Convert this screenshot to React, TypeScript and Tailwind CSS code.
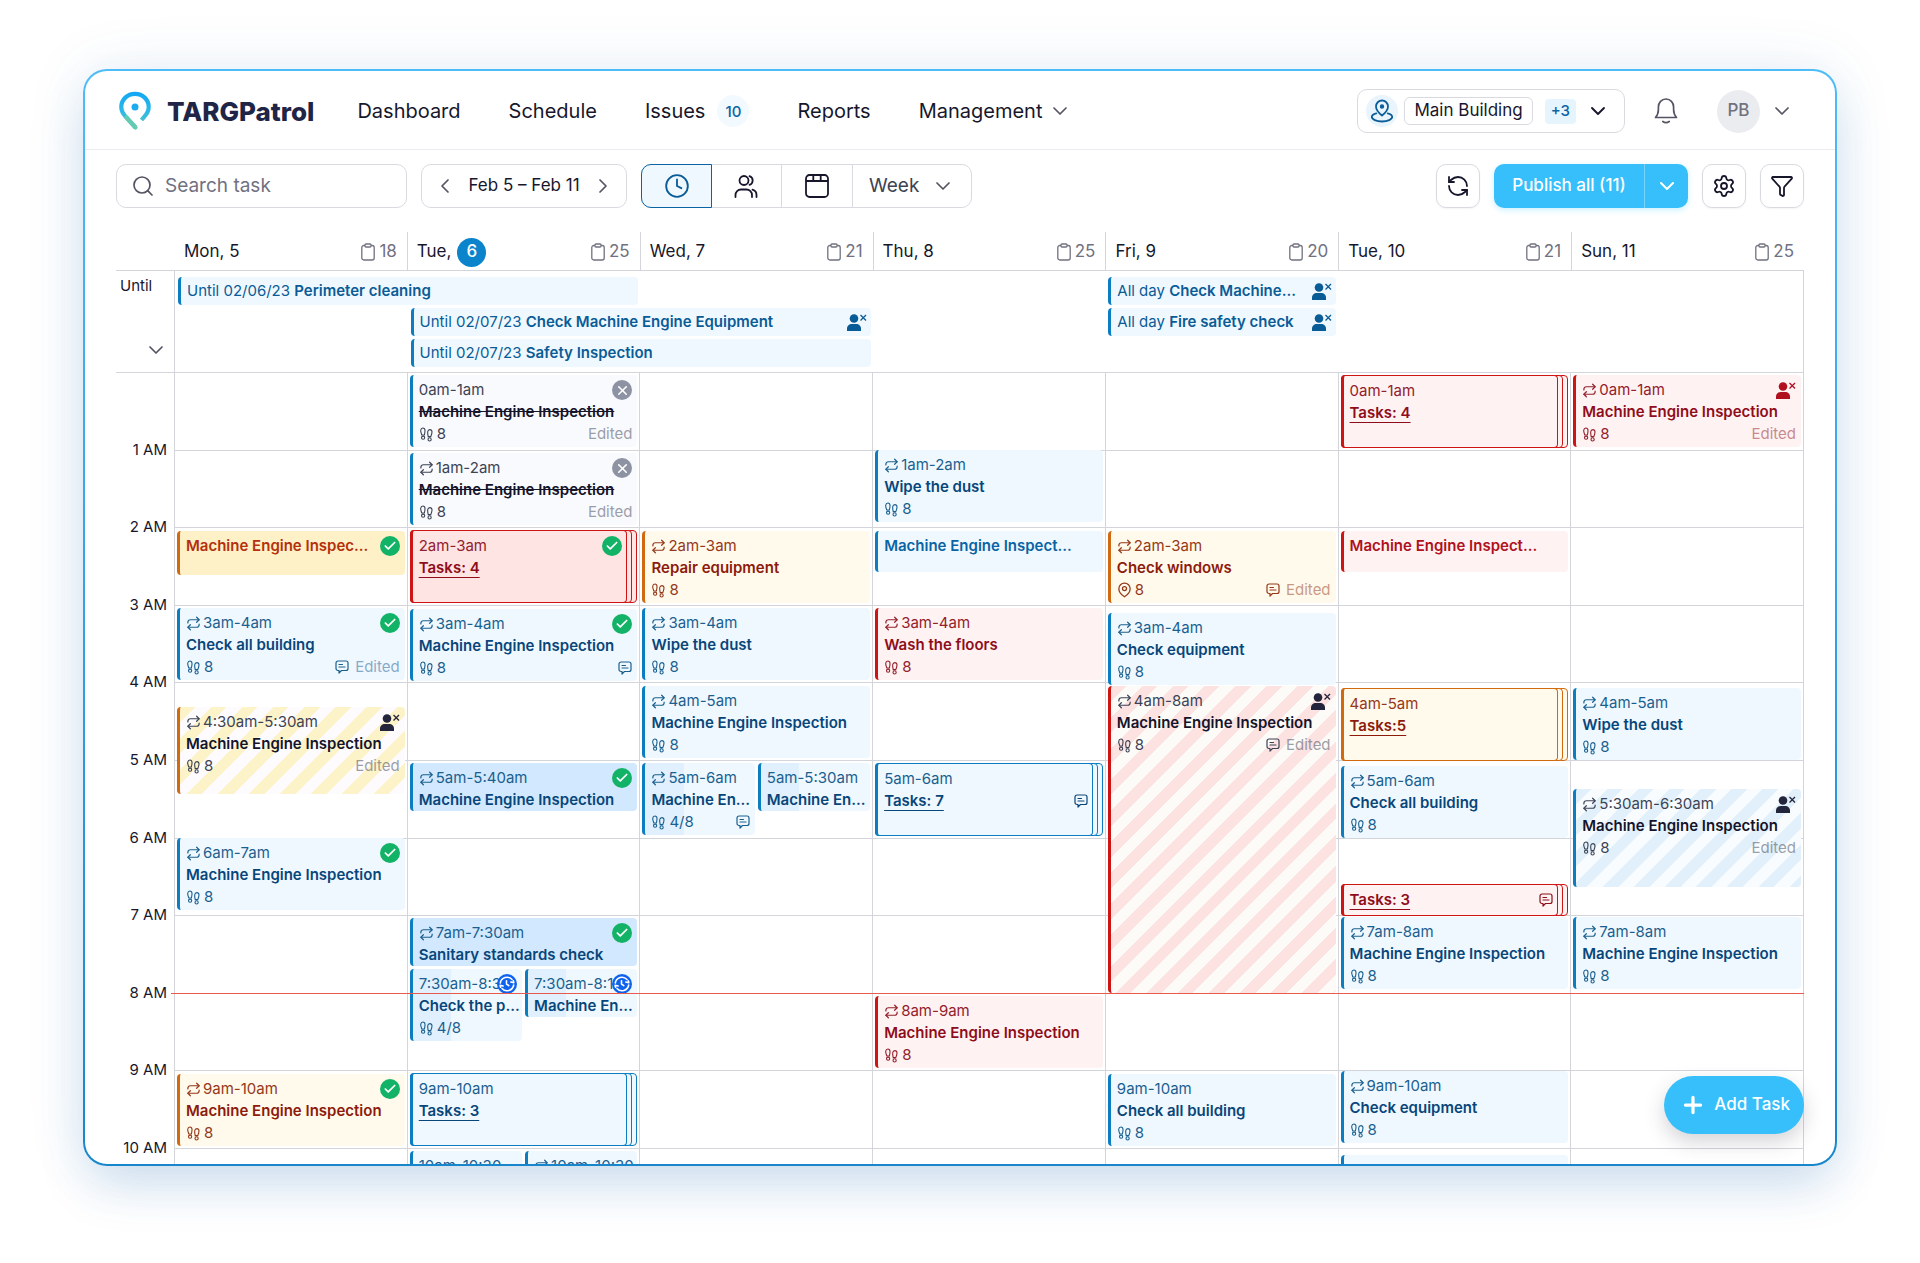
import { Check, ChevronDown, ChevronLeft, ChevronRight, Clock, Funnel, Plus, RefreshCcw, Repeat, Search, Settings, X } from "lucide-react";

type Tone = "blue" | "sky" | "progress" | "amber" | "sand" | "red" | "rose" | "gray" | "stripeAmber" | "stripeRed" | "stripeBlue";

type Task = {
    top: number;
    height: number;
    tone: Tone;
    title?: string;
    time?: string;
    repeat?: boolean;
    count?: string;
    pin?: boolean;
    status?: "done" | "cancelled" | "running" | "unassigned";
    note?: boolean;
    edited?: boolean;
    stack?: boolean;
    half?: boolean;
};

const tones: Record<Tone, { box: string; border: string; time: string; title: string; single: string }> = {
    blue: { box: "bg-[#f0f8ff]", border: "border-[#0b7dc0]", time: "text-[#1a608f]", title: "text-[#08467a]", single: "text-[#0a64a4]" },
    sky: { box: "bg-[#d1e8fe]", border: "border-[#0b7dc0]", time: "text-[#1a608f]", title: "text-[#08467a]", single: "text-[#0a64a4]" },
    progress: { box: "bg-[linear-gradient(90deg,#e0f0fe_35%,#f0f8ff_35%)]", border: "border-[#0b7dc0]", time: "text-[#1a608f]", title: "text-[#08467a]", single: "text-[#0a64a4]" },
    amber: { box: "bg-[#fffaeb]", border: "border-[#d0690f]", time: "text-[#95381a]", title: "text-[#8d1b0c]", single: "text-[#b4300c]" },
    sand: { box: "bg-[#fef0c7]", border: "border-[#d0690f]", time: "text-[#95381a]", title: "text-[#8d1b0c]", single: "text-[#b4300c]" },
    red: { box: "bg-[#fef3f2]", border: "border-[#cf1414]", time: "text-[#93202c]", title: "text-[#8f0d1b]", single: "text-[#b01020]" },
    rose: { box: "bg-[#fee4e2]", border: "border-[#cf1414]", time: "text-[#93202c]", title: "text-[#8f0d1b]", single: "text-[#b01020]" },
    gray: { box: "bg-[#f9fafd]", border: "border-[#0b7dc0]", time: "text-[#3c4354]", title: "text-[#14142b]", single: "text-[#14142b]" },
    stripeAmber: { box: "bg-[repeating-linear-gradient(135deg,#fdf3c9_0_11px,#fdfbfd_11px_22px)]", border: "border-[#d0690f]", time: "text-[#3c4354]", title: "text-[#14142b]", single: "text-[#14142b]" },
    stripeRed: { box: "bg-[repeating-linear-gradient(135deg,#fde2e2_0_11px,#fcfbf8_11px_22px)]", border: "border-[#cf1414]", time: "text-[#3c4354]", title: "text-[#14142b]", single: "text-[#14142b]" },
    stripeBlue: { box: "bg-[repeating-linear-gradient(135deg,#e1f0fb_0_11px,#f8fcff_11px_22px)]", border: "border-[#0b7dc0]", time: "text-[#3c4354]", title: "text-[#14142b]", single: "text-[#14142b]" },
};

const days = [
    { name: "Mon, 5", total: 18 },
    { name: "Tue,", today: "6", total: 25 },
    { name: "Wed, 7", total: 21 },
    { name: "Thu, 8", total: 25 },
    { name: "Fri, 9", total: 20 },
    { name: "Tue, 10", total: 21 },
    { name: "Sun, 11", total: 25 },
];

const hours = ["1 AM", "2 AM", "3 AM", "4 AM", "5 AM", "6 AM", "7 AM", "8 AM", "9 AM", "10 AM"];

const mei = "Machine Engine Inspection";

// top and height are in pixels, one hour is about 78
const week: Task[][] = [
    [
        { top: 158, height: 44, tone: "sand", title: "Machine Engine Inspec...", status: "done" },
        { top: 235, height: 72, tone: "blue", time: "3am-4am", repeat: true, title: "Check all building", count: "8", status: "done", note: true, edited: true },
        { top: 334, height: 87, tone: "stripeAmber", time: "4:30am-5:30am", repeat: true, title: mei, count: "8", status: "unassigned", edited: true },
        { top: 465, height: 72, tone: "blue", time: "6am-7am", repeat: true, title: mei, count: "8", status: "done" },
        { top: 701, height: 72, tone: "amber", time: "9am-10am", repeat: true, title: mei, count: "8", status: "done" },
    ],
    [
        { top: 2, height: 72, tone: "gray", time: "0am-1am", title: mei, count: "8", status: "cancelled", edited: true },
        { top: 80, height: 72, tone: "gray", time: "1am-2am", repeat: true, title: mei, count: "8", status: "cancelled", edited: true },
        { top: 157, height: 73, tone: "rose", time: "2am-3am", title: "Tasks: 4", status: "done", stack: true },
        { top: 236, height: 72, tone: "blue", time: "3am-4am", repeat: true, title: mei, count: "8", status: "done", note: true },
        { top: 390, height: 48, tone: "sky", time: "5am-5:40am", repeat: true, title: mei, status: "done" },
        { top: 545, height: 48, tone: "sky", time: "7am-7:30am", repeat: true, title: "Sanitary standards check", status: "done" },
        { top: 596, height: 72, tone: "progress", time: "7:30am-8:3", title: "Check the p...", count: "4/8", status: "running", half: true },
        { top: 596, height: 48, tone: "progress", time: "7:30am-8:1", title: "Machine En...", status: "running", half: true },
        { top: 700, height: 73, tone: "blue", time: "9am-10am", title: "Tasks: 3", stack: true },
        { top: 778, height: 72, tone: "blue", time: "10am-10:30", half: true },
        { top: 778, height: 72, tone: "blue", time: "10am-10:30", repeat: true, half: true },
    ],
    [
        { top: 158, height: 72, tone: "amber", time: "2am-3am", repeat: true, title: "Repair equipment", count: "8" },
        { top: 235, height: 72, tone: "blue", time: "3am-4am", repeat: true, title: "Wipe the dust", count: "8" },
        { top: 313, height: 72, tone: "blue", time: "4am-5am", repeat: true, title: mei, count: "8" },
        { top: 390, height: 72, tone: "progress", time: "5am-6am", repeat: true, title: "Machine En...", count: "4/8", note: true, half: true },
        { top: 390, height: 48, tone: "progress", time: "5am-5:30am", title: "Machine En...", half: true },
    ],
    [
        { top: 77, height: 72, tone: "blue", time: "1am-2am", repeat: true, title: "Wipe the dust", count: "8" },
        { top: 158, height: 41, tone: "blue", title: "Machine Engine Inspect..." },
        { top: 235, height: 72, tone: "red", time: "3am-4am", repeat: true, title: "Wash the floors", count: "8" },
        { top: 390, height: 73, tone: "blue", time: "5am-6am", title: "Tasks: 7", note: true, stack: true },
        { top: 623, height: 72, tone: "red", time: "8am-9am", repeat: true, title: mei, count: "8" },
    ],
    [
        { top: 158, height: 72, tone: "amber", time: "2am-3am", repeat: true, title: "Check windows", count: "8", pin: true, note: true, edited: true },
        { top: 240, height: 72, tone: "blue", time: "3am-4am", repeat: true, title: "Check equipment", count: "8" },
        { top: 313, height: 307, tone: "stripeRed", time: "4am-8am", repeat: true, title: mei, count: "8", status: "unassigned", note: true, edited: true },
        { top: 701, height: 72, tone: "blue", time: "9am-10am", title: "Check all building", count: "8" },
    ],
    [
        { top: 2, height: 73, tone: "red", time: "0am-1am", title: "Tasks: 4", stack: true },
        { top: 158, height: 41, tone: "red", title: "Machine Engine Inspect..." },
        { top: 315, height: 73, tone: "amber", time: "4am-5am", title: "Tasks:5", stack: true },
        { top: 393, height: 72, tone: "blue", time: "5am-6am", repeat: true, title: "Check all building", count: "8" },
        { top: 511, height: 32, tone: "red", title: "Tasks: 3", note: true, stack: true },
        { top: 544, height: 72, tone: "blue", time: "7am-8am", repeat: true, title: mei, count: "8" },
        { top: 698, height: 72, tone: "blue", time: "9am-10am", repeat: true, title: "Check equipment", count: "8" },
        { top: 782, height: 72, tone: "blue" },
    ],
    [
        { top: 2, height: 72, tone: "red", time: "0am-1am", repeat: true, title: mei, count: "8", status: "unassigned", edited: true },
        { top: 315, height: 72, tone: "blue", time: "4am-5am", repeat: true, title: "Wipe the dust", count: "8" },
        { top: 416, height: 98, tone: "stripeBlue", time: "5:30am-6:30am", repeat: true, title: mei, count: "8", status: "unassigned", edited: true },
        { top: 544, height: 72, tone: "blue", time: "7am-8am", repeat: true, title: mei, count: "8" },
    ],
];

function Logo() {
    return (
        <svg width="32" height="40" viewBox="0 0 32 40" fill="none">
            <defs>
                <linearGradient id="logo" x1="16" y1="0" x2="16" y2="40" gradientUnits="userSpaceOnUse">
                    <stop stopColor="#0fa6f5" />
                    <stop offset="0.5" stopColor="#2cb8e8" />
                    <stop offset="1" stopColor="#62cbb2" />
                </linearGradient>
            </defs>
            <path d="M16.500 36.500 6.600 25.600C4 22.800 2.300 19.800 2.300 16 2.300 8.600 8.400 2.800 16 2.800S29.700 8.600 29.700 16c0 3.800-1.700 6.800-4.300 9.600L22.500 29" stroke="url(#logo)" strokeWidth="4.200" strokeLinejoin="round" />
            <path d="m7.500 26.500 9 10" stroke="#62cbb2" strokeWidth="4.200" strokeLinecap="round" />
            <circle cx="16" cy="16" r="3.500" fill="#1cabee" />
        </svg>
    );
}

function Bell() {
    return (
        <svg width="26" height="28" viewBox="0 0 26 28" fill="none" stroke="#545463" strokeWidth="1.700" strokeLinecap="round" strokeLinejoin="round">
            <path d="M2.500 20.500c2-2.300 2.900-4.700 2.900-8V10C5.400 5.500 8.600 2 13 2s7.600 3.500 7.600 8v2.500c0 3.300.9 5.700 2.900 8Z" />
            <path d="M9.800 24.500c1.800 1.300 4.600 1.300 6.400 0" />
        </svg>
    );
}

function SitePin() {
    return (
        <svg width="24" height="24" viewBox="0 0 24 24" fill="none" stroke="#0d5e98" strokeWidth="1.800" strokeLinecap="round" strokeLinejoin="round">
            <path d="M12 16.500s-6-4.700-6-9a6 6 0 0 1 12 0c0 4.300-6 9-6 9Z" />
            <circle cx="12" cy="7.500" r="1.300" fill="#0d5e98" />
            <path d="M6.300 14.300C3.500 15 1.800 16.300 1.800 17.800 1.800 20.500 6.300 22.500 12 22.500s10.200-2 10.200-4.700c0-1.500-1.700-2.800-4.500-3.500" />
        </svg>
    );
}

function People() {
    return (
        <svg width="26" height="26" viewBox="0 0 26 26" fill="none" stroke="currentColor" strokeWidth="1.800" strokeLinecap="round" strokeLinejoin="round">
            <circle cx="11" cy="7.500" r="4.500" />
            <path d="M2.500 24v-2a5.500 5.500 0 0 1 5.500-5.500h5.500A5.500 5.500 0 0 1 19 22v2" />
            <path d="M16.500 3.200a4.500 4.500 0 0 1 0 8.600M19.500 16.600A5.500 5.500 0 0 1 23.500 22v2" />
        </svg>
    );
}

function CalendarGrid() {
    return (
        <svg width="26" height="26" viewBox="0 0 26 26" fill="none" stroke="currentColor" strokeWidth="1.800" strokeLinejoin="round">
            <rect x="2" y="2" width="22" height="22" rx="3.500" />
            <path d="M2 8h22M9.300 2v6M16.700 2v6" />
        </svg>
    );
}

function Clipboard() {
    return (
        <svg width="14" height="18" viewBox="0 0 14 18" fill="none" stroke="#71717f" strokeWidth="1.300" strokeLinejoin="round">
            <rect x="0.800" y="2.500" width="12.400" height="14.500" rx="2" />
            <rect x="4" y="1" width="6" height="3" rx="1" fill="white" />
        </svg>
    );
}

function Steps() {
    return (
        <svg className="shrink-0" width="15" height="15" viewBox="0 0 15 15" fill="none" stroke="currentColor" strokeWidth="1.100">
            <path d="M2.800 8C2 6 1.500 4.700 1.700 3.200 1.900 1.800 2.700 1 3.900 1s2 .8 2.100 2.200C6.100 4.700 5.800 6 5.400 8Z" />
            <path d="M9.200 9.600C8.800 7.600 8.500 6.300 8.700 4.800 8.900 3.400 9.700 2.600 10.900 2.600s2 .8 2.100 2.200c.1 1.500-.4 2.800-1.200 4.800Z" />
            <circle cx="4.100" cy="10.700" r="1.600" />
            <circle cx="10.600" cy="12.400" r="1.600" />
        </svg>
    );
}

function Pin() {
    return (
        <svg className="shrink-0" width="15" height="16" viewBox="0 0 13 15" fill="none" stroke="currentColor" strokeWidth="1.200">
            <path d="M6.500 13.800S1.200 10.600 1.200 6.300a5.300 5.300 0 0 1 10.600 0c0 4.300-5.300 7.500-5.300 7.500Z" />
            <circle cx="6.500" cy="6.200" r="1.900" />
        </svg>
    );
}

function Note() {
    return (
        <svg className="shrink-0" width="14" height="14" viewBox="0 0 14 14" fill="none" stroke="currentColor" strokeWidth="1.200" strokeLinecap="round" strokeLinejoin="round">
            <path d="M3 1h8a2 2 0 0 1 2 2v5.500a2 2 0 0 1-2 2H6.500L4 13v-2.500H3a2 2 0 0 1-2-2V3a2 2 0 0 1 2-2Z" />
            <path d="M4 4.500h3.500M4 7h6" />
        </svg>
    );
}

function Unassigned() {
    return (
        <svg className="shrink-0" width="21" height="19" viewBox="0 0 21 19" fill="currentColor">
            <circle cx="8" cy="5.500" r="4.300" />
            <path d="M1 18v-2.500C1 12.800 3.200 11 5.800 11h4.400c2.600 0 4.800 1.800 4.800 4.500V18Z" />
            <path d="m14.500 2 5.500 5.500M20 2l-5.500 5.500" stroke="currentColor" strokeWidth="1.300" />
        </svg>
    );
}

function Running() {
    return (
        <svg className="shrink-0" width="20" height="20" viewBox="0 0 20 20" fill="none" stroke="white" strokeWidth="1.600" strokeLinecap="round" strokeLinejoin="round">
            <circle cx="10" cy="10" r="10" fill="#0f62ee" stroke="none" />
            <path d="M3.300 9A6.800 6.800 0 0 1 15 5.500M16.700 11A6.800 6.800 0 0 1 5 14.500" />
            <path d="M16.300 6.800a7 7 0 0 1 .5 2l-3-.8M3.600 13.200a7 7 0 0 1-.5-2l3 .8" />
            <path d="M9.500 6.800V10l2.300 1.600" />
        </svg>
    );
}

function Status({ status }: { status: Task["status"] }) {
    if (status === "done") {
        return (
            <span className="flex size-5 shrink-0 items-center justify-center rounded-full bg-[#12b366] text-white">
                <Check size={14} strokeWidth={3} />
            </span>
        );
    }
    if (status === "cancelled") {
        return (
            <span className="flex size-5 shrink-0 items-center justify-center rounded-full bg-[#8e93a4] text-white">
                <X size={15} strokeWidth={2.5} />
            </span>
        );
    }
    if (status === "running") return <Running />;
    if (status === "unassigned") return <Unassigned />;
    return null;
}

function TaskBody({ task }: { task: Task }) {
    const tone = tones[task.tone];
    const titleClass = `${task.time || task.stack ? tone.title : tone.single} ${task.stack ? "underline underline-offset-4" : ""} ${task.status === "cancelled" ? "line-through" : ""}`;

    return (
        <>
            {task.time && (
                <div className={`flex h-[22px] items-center justify-between ${tone.time}`}>
                    <span className="flex min-w-0 flex-1 items-center gap-0.5">
                        {task.repeat && <Repeat className="shrink-0" size={15} strokeWidth={1.9} />}
                        {task.time}
                    </span>
                    <span className={task.tone === "red" ? "text-[#b01020]" : "text-[#22253b]"}><Status status={task.status} /></span>
                </div>
            )}
            {task.title && (
                <div className={`flex h-[22px] items-center justify-between font-semibold ${titleClass}`}>
                    <span>{task.title}</span>
                    {!task.time && <Status status={task.status} />}
                    {task.stack && task.note && <Note />}
                </div>
            )}
            {!task.stack && task.count && (
                <div className={`flex h-[22px] items-center justify-between ${tone.time}`}>
                    <span className="flex items-center gap-[3px]">
                        {task.pin ? <Pin /> : <Steps />}
                        {task.count}
                    </span>
                    <span className="flex items-center gap-1.5">
                        {task.note && <Note />}
                        {task.edited && <span className="opacity-50">Edited</span>}
                    </span>
                </div>
            )}
        </>
    );
}

function TaskCard({ task }: { task: Task }) {
    const tone = tones[task.tone];
    const style = { gridRow: `${task.top + 1} / span ${task.height}` };
    const span = task.half ? "" : "col-span-2";

    if (task.stack) {
        const layer = `rounded border ${tone.border} ${tone.box} [grid-area:1/1]`;
        return (
            <article style={style} className={`${span} grid text-[15px] leading-[22px] whitespace-nowrap`}>
                <div className={layer}></div>
                <div className={`${layer} mr-[5px]`}></div>
                <div className={`${layer} mr-[10px] border-l-3 pt-1 pr-1 pl-1.5`}>
                    <TaskBody task={task} />
                </div>
            </article>
        );
    }

    return (
        <article style={style} className={`${span} rounded border-l-3 pt-1 pr-[5px] pl-1.5 text-[15px] leading-[22px] whitespace-nowrap ${tone.border} ${tone.box}`}>
            <TaskBody task={task} />
        </article>
    );
}

function LongTask({ when, title, place, unassigned }: { when: string; title: string; place: string; unassigned?: boolean }) {
    return (
        <article className={`mr-0.5 ml-[3px] flex items-center justify-between rounded border-l-3 border-[#0b7dc0] bg-[#f0f8ff] pr-1 pl-1.5 text-[15px] whitespace-nowrap text-[#0a5c96] ${place}`}>
            <span>{when} <b className="font-semibold">{title}</b></span>
            {unassigned && <Unassigned />}
        </article>
    );
}

function Header() {
    return (
        <header className="flex h-[79px] shrink-0 items-center border-b border-[#ebecef] pt-0.5 pr-[41px] pl-[34px]">
            <a href="#" className="flex items-center gap-4 text-[26px] font-extrabold text-[#1f2547]">
                <Logo />
                TARGPatrol
            </a>
            <nav className="ml-[43px] flex items-center gap-12 text-xl text-[#17172c]">
                <a href="#">Dashboard</a>
                <a href="#">Schedule</a>
                <a href="#" className="flex items-center gap-3">
                    Issues
                    <span className="flex size-8 items-center justify-center rounded-full bg-[#f2f9ff] text-[15px] font-medium text-[#0a64a4]">10</span>
                </a>
                <a href="#">Reports</a>
                <button className="flex items-center gap-1.5">
                    Management
                    <ChevronDown size={24} strokeWidth={1.7} color="#545463" />
                </button>
            </nav>
            <div className="ml-auto flex items-center">
                <button className="flex h-11 items-center rounded-[10px] border border-[#d9dae0] pr-3.5 pl-2 text-[#17172c]">
                    <span className="flex size-8 items-center justify-center rounded-full bg-[#e9f4fd]"><SitePin /></span>
                    <span className="ml-1.5 flex h-7 items-center rounded-md border border-[#d9dae0] px-[9px] text-[17px]">Main Building</span>
                    <span className="ml-3 flex h-[25px] items-center rounded bg-[#e6f4fe] px-1.5 text-[15px] font-medium text-[#0a64a4]">+3</span>
                    <ChevronDown className="ml-2.5" size={24} strokeWidth={1.9} />
                </button>
                <button className="ml-7" aria-label="Notifications"><Bell /></button>
                <button className="ml-[38px] flex size-[43px] items-center justify-center rounded-full bg-[#ebecef] text-[17px] font-medium text-[#71717f]">PB</button>
                <button className="ml-2.5" aria-label="Account"><ChevronDown size={24} strokeWidth={1.7} color="#545463" /></button>
            </div>
        </header>
    );
}

function Toolbar() {
    const square = "flex size-11 items-center justify-center rounded-[10px] border border-[#d9dae0] text-[#17172c] shadow-xs";
    return (
        <div className="flex shrink-0 items-center gap-3.5 px-[31px] pt-3.5 text-[#17172c]">
            <label className="flex h-11 w-[291px] items-center gap-2.5 rounded-[10px] border border-[#d9dae0] px-3.5">
                <Search className="shrink-0" size={24} strokeWidth={1.7} color="#545463" />
                <input type="text" aria-label="Search task" placeholder="Search task" className="w-full text-[19px] outline-none placeholder:text-[#71717f]" />
            </label>
            <div className="flex h-11 w-[206px] items-center justify-between rounded-[10px] border border-[#d9dae0] px-[11px] text-[17px]">
                <button aria-label="Previous week"><ChevronLeft size={24} strokeWidth={1.7} color="#545463" /></button>
                Feb 5 – Feb 11
                <button aria-label="Next week"><ChevronRight size={24} strokeWidth={1.7} color="#545463" /></button>
            </div>
            <div className="flex h-11 rounded-[10px] border border-[#d9dae0]">
                <button aria-label="By time" className="-m-px flex w-[71px] items-center justify-center rounded-l-[10px] border border-[#0a64a4] bg-[#eff8ff] text-[#0a5c96]">
                    <Clock size={26} strokeWidth={1.7} />
                </button>
                <button aria-label="By people" className="flex w-[71px] items-center justify-center border-r border-[#d9dae0]"><People /></button>
                <button aria-label="By date" className="flex w-[71px] items-center justify-center border-r border-[#d9dae0]"><CalendarGrid /></button>
                <div className="grid w-[118px] items-center">
                    <select aria-label="Period" className="h-full appearance-none pl-4 text-[19px] text-[#3c4354] outline-none [grid-area:1/1]">
                        <option>Week</option>
                    </select>
                    <ChevronDown className="pointer-events-none mr-4 justify-self-end [grid-area:1/1]" size={24} strokeWidth={1.7} color="#545463" />
                </div>
            </div>
            <button aria-label="Refresh" className={`${square} ml-auto`}><RefreshCcw size={24} strokeWidth={1.8} /></button>
            <div className="flex h-11 divide-x divide-[#7ad3fb] overflow-hidden rounded-[10px] bg-[#36bffa] text-[17px] font-medium text-white shadow-[0_2px_6px_#c9f0ff]">
                <button className="w-[151px]">Publish all (11)</button>
                <button aria-label="Publish options" className="flex w-[43px] items-center justify-center"><ChevronDown size={24} strokeWidth={2} /></button>
            </div>
            <button aria-label="Settings" className={square}><Settings size={24} strokeWidth={1.8} /></button>
            <button aria-label="Filter" className={square}><Funnel size={24} strokeWidth={1.8} /></button>
        </div>
    );
}

function Calendar() {
    return (
        <main className="mt-6 flex min-h-0 flex-1 flex-col px-[31px]">
            <div className="flex h-[39px] shrink-0 border-b border-[#d3d5db]">
                <div className="w-[58px] shrink-0"></div>
                <div className="grid flex-1 grid-cols-7">
                    {days.map((day, index) => (
                        <div key={day.name} className={`flex items-center border-l pt-0.5 pr-2.5 pl-[9px] text-[17px] text-[#17172c] ${index === 0 ? "border-transparent" : "border-[#d3d5db]"}`}>
                            {day.name}
                            {day.today && <span className="ml-1.5 flex size-[29px] items-center justify-center rounded-full bg-[#0b84cc] font-medium text-white">{day.today}</span>}
                            <span className="ml-auto flex items-center gap-1 text-[#71717f]"><Clipboard /> {day.total}</span>
                        </div>
                    ))}
                </div>
            </div>

            <div className="flex h-[102px] shrink-0 border-b border-[#d3d5db]">
                <div className="flex w-[58px] shrink-0 flex-col justify-between pt-1 pr-1.5 pb-2.5 pl-1 text-[15px]">
                    Until
                    <button aria-label="Collapse" className="self-end"><ChevronDown size={24} strokeWidth={1.7} color="#545463" /></button>
                </div>
                <div className="grid flex-1 auto-rows-[28px] grid-cols-7 content-start gap-y-[3px] border-x border-[#d3d5db] pt-1.5">
                    <LongTask when="Until 02/06/23" title="Perimeter cleaning" place="col-start-1 col-span-2 row-start-1" />
                    <LongTask when="All day" title="Check Machine..." place="col-start-5 row-start-1" unassigned />
                    <LongTask when="Until 02/07/23" title="Check Machine Engine Equipment" place="col-start-2 col-span-2 row-start-2" unassigned />
                    <LongTask when="All day" title="Fire safety check" place="col-start-5 row-start-2" unassigned />
                    <LongTask when="Until 02/07/23" title="Safety Inspection" place="col-start-2 col-span-2 row-start-3" />
                </div>
            </div>

            <div className="relative flex min-h-0 flex-1 overflow-hidden">
                <div className="mt-[38px] grid h-[776px] w-[58px] shrink-0 grid-rows-10 items-center pr-[7px] text-right text-[15px]">
                    {hours.map((hour) => <span key={hour}>{hour}</span>)}
                </div>
                <div className="grid flex-1 grid-cols-7 border-r border-[#d3d5db]">
                    {week.map((tasks, index) => (
                        <div key={index} className="grid min-w-0 border-l border-[#d3d5db]">
                            <div className="grid h-[776px] grid-rows-10 [grid-area:1/1]">
                                {hours.map((hour) => <div key={hour} className="border-b border-[#d3d5db]"></div>)}
                            </div>
                            <div className="grid auto-rows-[1px] grid-cols-2 content-start gap-x-[3px] px-0.5 [grid-area:1/1]">
                                {tasks.map((task, i) => <TaskCard key={i} task={task} />)}
                            </div>
                        </div>
                    ))}
                </div>
                <div className="absolute top-[620px] right-0 left-[55px] h-px bg-[#ea5a4c]"></div>
            </div>
        </main>
    );
}

function App() {
    return (
        <div className="flex h-screen flex-col bg-white px-[83px] pt-[69px] pb-[97px] text-[#17172c] font-['Inter',sans-serif]">
            <div className="flex min-h-0 flex-1 flex-col rounded-[24px] bg-linear-to-b from-[#4dbcf7] to-[#1786cb] p-0.5 shadow-[0_24px_50px_-6px_rgba(20,100,175,0.18),0_0_60px_rgba(30,110,175,0.1)]">
                <div className="relative flex min-h-0 flex-1 flex-col overflow-hidden rounded-[22px] bg-white">
                    <Header />
                    <Toolbar />
                    <Calendar />
                    <button className="absolute right-[31px] bottom-[30px] flex h-[58px] items-center gap-2 rounded-full bg-[#36bffa] pr-3.5 pl-4 text-[17px] font-medium text-white shadow-[0_8px_20px_rgba(60,60,80,0.22)]">
                        <Plus size={26} strokeWidth={3} />
                        Add Task
                    </button>
                </div>
            </div>
        </div>
    );
}

export default App;
